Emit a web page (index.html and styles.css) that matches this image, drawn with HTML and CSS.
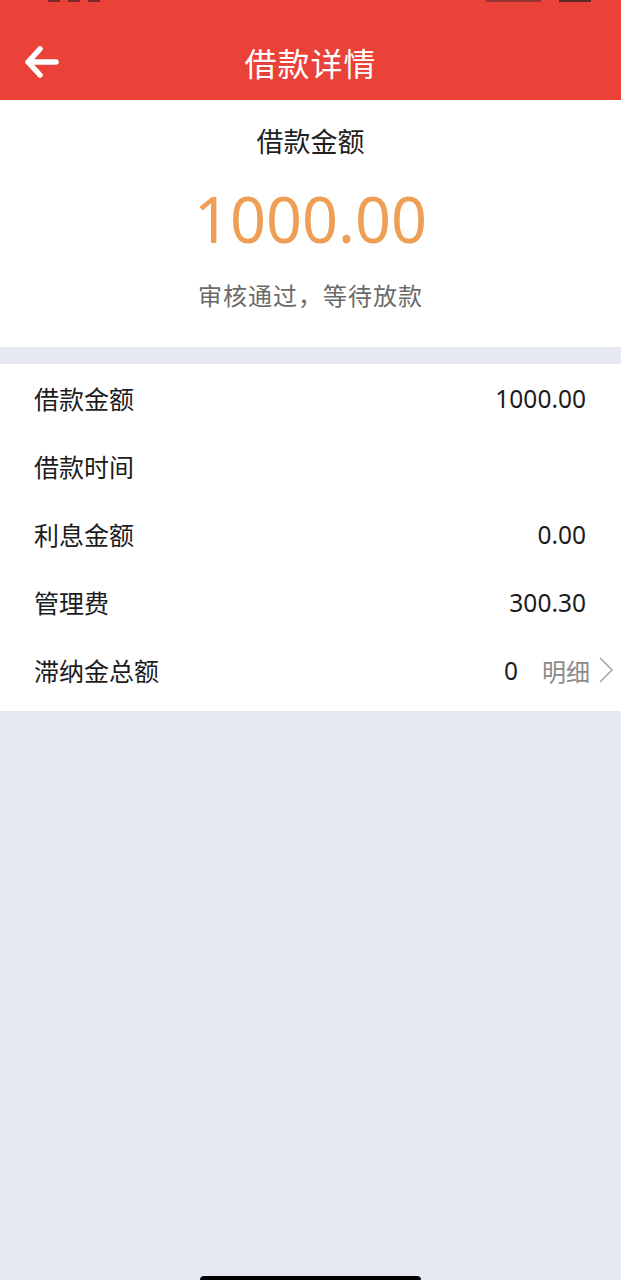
FILE: index.html
```html
<!DOCTYPE html>
<html lang="zh-CN">
<head>
<meta charset="utf-8">
<title>借款详情</title>
<link rel="stylesheet" href="styles.css">
</head>
<body>
<div class="page">
  <header class="nav">
    <div class="status">
      <span class="time-bits"><i></i><i></i><i></i></span>
      <span class="icons"><span class="sig"></span><span class="bat"></span></span>
    </div>
    <div class="bar">
      <svg class="back" width="34" height="32" viewBox="0 0 34 32" aria-hidden="true">
        <path d="M15 3 L3 16 L15 29 M3 16 L31 16" fill="none" stroke="#fff" stroke-width="5.5" stroke-linecap="round" stroke-linejoin="round"/>
      </svg>
      <h1 class="title">借款详情</h1>
      <span class="spacer"></span>
    </div>
  </header>

  <section class="summary">
    <div class="summary-label">借款金额</div>
    <div class="summary-amount">1000.00</div>
    <div class="summary-status">审核通过，等待放款</div>
  </section>

  <section class="list">
    <div class="row"><span class="label">借款金额</span><span class="value">1000.00</span></div>
    <div class="row"><span class="label">借款时间</span><span class="value"></span></div>
    <div class="row"><span class="label">利息金额</span><span class="value">0.00</span></div>
    <div class="row"><span class="label">管理费</span><span class="value">300.30</span></div>
    <div class="row row-link">
      <span class="label">滞纳金总额</span>
      <span class="value">0</span>
      <span class="detail">明细</span>
      <svg class="chev" width="16" height="28" viewBox="0 0 16 28" aria-hidden="true">
        <path d="M2 2 L14 14 L2 26" fill="none" stroke="#a8a8a8" stroke-width="1.6"/>
      </svg>
    </div>
  </section>

  <div class="home-indicator"></div>
</div>
</body>
</html>
```

FILE: styles.css
```css
* { box-sizing: border-box; }
html, body {
  margin: 0;
  padding: 0;
  background: #e6e9f2;
  font-family: "Noto Sans", "Noto Sans CJK SC", sans-serif;
}
.page {
  width: 621px;
  min-height: 1280px;
  background: #e6e9f2;
  position: relative;
  overflow: hidden;
}
.nav {
  background: #ea4139;
  height: 100px;
  display: flex;
  flex-direction: column;
}
.status {
  height: 4px;
  display: flex;
  justify-content: space-between;
  align-items: flex-start;
  padding: 0 30px 0 48px;
}
.time-bits { display: flex; gap: 8px; }
.time-bits i {
  display: block;
  width: 12px;
  height: 2px;
  background: #4a2020;
  opacity: .7;
}
.icons { display: flex; gap: 18px; padding-left: 0; }
.sig { width: 55px; height: 2px; background: #5a2a2a; opacity: .6; display: block; }
.bat { width: 32px; height: 2px; background: #3a2222; opacity: .8; display: block; }
.bar {
  flex: 1;
  display: grid;
  grid-template-columns: 1fr auto 1fr;
  align-items: center;
  padding-top: 20px;
}
.back {
  justify-self: start;
  margin-left: 25px;
}
.title {
  margin: 0;
  color: #fff;
  font-family: "Noto Sans CJK SC", sans-serif;
  font-weight: 400;
  font-size: 32px;
  line-height: 40px;
  letter-spacing: 1px;
}
.summary {
  background: #fff;
  height: 247px;
  display: flex;
  flex-direction: column;
  align-items: center;
  padding-top: 22px;
}
.summary-label {
  font-family: "Noto Sans CJK SC", sans-serif;
  font-size: 27px;
  line-height: 38px;
  color: #1f1f1f;
}
.summary-amount {
  font-family: "Noto Sans", sans-serif;
  font-size: 63px;
  line-height: 80px;
  color: #ee9f55;
  margin-top: 19px;
}
.summary-status {
  font-family: "Noto Sans CJK SC", sans-serif;
  font-size: 24px;
  line-height: 34px;
  color: #6b6b6b;
  margin-top: 19px;
  letter-spacing: 1px;
}
.list {
  background: #fff;
  margin-top: 17px;
  padding: 0 0 7px;
}
.row {
  height: 68px;
  display: flex;
  align-items: center;
  padding: 0 35px 0 34px;
}
.label {
  flex: 1;
  font-family: "Noto Sans CJK SC", sans-serif;
  font-size: 25px;
  color: #1c1c1c;
}
.value {
  font-family: "Noto Sans", sans-serif;
  font-size: 24.5px;
  color: #1c1c1c;
}
.row-link { padding-right: 7px; }
.detail {
  font-family: "Noto Sans CJK SC", sans-serif;
  font-size: 24px;
  color: #8a8a8a;
  margin-left: 24px;
}
.chev { margin-left: 8px; }
.home-indicator {
  position: absolute;
  left: 200px;
  bottom: -4px;
  width: 221px;
  height: 8px;
  border-radius: 4px;
  background: #000;
}
```
